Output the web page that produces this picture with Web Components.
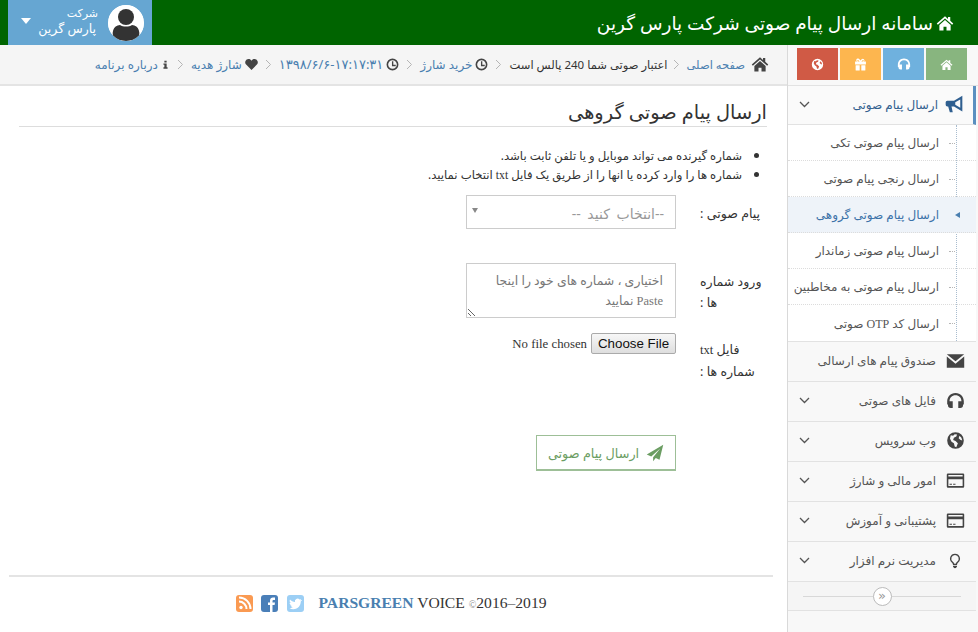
<!DOCTYPE html>
<html lang="fa" dir="rtl">
<head>
<meta charset="utf-8">
<title>ارسال پیام صوتی گروهی</title>
<style>
  html,body{margin:0;padding:0;height:632px;overflow:hidden;background:#fff;}
  body{font-family:"Noto Sans","DejaVu Sans",sans-serif;}
  #page{display:flex;flex-direction:column;height:632px;}
  #body{display:flex;flex:1;min-height:0;}
  ps-side{flex:none;}
  #main{flex:1;min-width:0;display:flex;flex-direction:column;}
</style>
</head>
<body>
<div id="page">
  <ps-header></ps-header>
  <div id="body">
    <ps-side></ps-side>
    <div id="main">
      <ps-crumbs></ps-crumbs>
      <ps-form></ps-form>
      <ps-foot></ps-foot>
    </div>
  </div>
</div>

<script>
// icons, all on a 24 box so they scale with width/height
const ICONS = {
  home: '<path d="M12 3 1 12.600l1.500 1.700L12 6l9.500 8.300 1.500-1.700-4-3.500V4h-3v2.500z"/><path d="M12 8 4.500 14.500V22H10v-5h4v5h5.500v-7.500z"/>',
  bullhorn: '<path d="M22 2 12 8H4a2 2 0 0 0-2 2v3a2 2 0 0 0 2 2h1l2 7h3.500l-1.500-7h3l10 6zM19.500 6.500v10L13.500 13V10z" fill-rule="evenodd"/>',
  mail: '<path d="M1 4h22L12 13z"/><path d="M1 7v14h22V7L12 16z"/>',
  phones: '<path d="M12 2.500C5.500 2.500 1.500 7.500 1.500 13v4h3v-4c0-4.500 3-7.500 7.500-7.500s7.500 3 7.500 7.500v4h3v-4c0-5.500-4-10.500-10.500-10.500z"/><path d="M4 13h4.500v8.500H6a3.500 3.500 0 0 1-3.500-3.500v-2a3 3 0 0 1 1.500-3zM20 13h-4.500v8.500H18a3.500 3.500 0 0 0 3.500-3.500v-2a3 3 0 0 0-1.500-3z"/>',
  globe: '<path fill-rule="evenodd" d="M12 1.500a10.500 10.500 0 1 0 0 21 10.500 10.500 0 0 0 0-21zM6 5.500l3 .5 2-2 3 .5-1 2.500-3 1.500-1 3 3 1 3 3-2 5-2-1-1-4-3-2-2-4zM17 6l2.500 2.500 1 3.500-2.500-1-2-2z"/>',
  card: '<path fill-rule="evenodd" d="M2.500 3h19A1.500 1.500 0 0 1 23 4.500v15a1.500 1.500 0 0 1-1.500 1.500h-19A1.500 1.500 0 0 1 1 19.500v-15A1.500 1.500 0 0 1 2.500 3zM3 5v2h18V5zM3 10.500V19h18v-8.500zM4.500 16h3v1.500h-3zM9 16h3v1.500H9z"/>',
  bulb: '<path fill-rule="evenodd" d="M12 1a7.500 7.500 0 0 0-4.500 13.500c1 1 1.500 2 1.500 3.500h6c0-1.500.5-2.500 1.500-3.500A7.500 7.500 0 0 0 12 1zm0 2a5.500 5.500 0 0 1 3.200 10c-1.200 1-2 2-2.200 3h-2c-.2-1-1-2-2.200-3A5.500 5.500 0 0 1 12 3z"/><path d="M9 19h6v1.500l-1 1v.5l-2 1-2-1v-.5l-1-1z"/>',
  plane: '<path d="M23 1 1 14l6 2.500L19 6 9.500 17.500v5.500l3.500-4.500 5 2.500z"/>',
  heart: '<path d="M12 22 2.500 12.500A6 6 0 0 1 7 2c2 0 3.800 1 5 3 1.200-2 3-3 5-3a6 6 0 0 1 4.500 10.500z"/>',
  clock: '<path fill-rule="evenodd" d="M12 1a11 11 0 1 0 0 22 11 11 0 0 0 0-22zm0 3a8 8 0 1 1 0 16 8 8 0 0 1 0-16z"/><path d="M11 6h2.500v6.500H18V15h-7z"/>',
  info: '<path d="M9 2h6v4.500H9zM6.500 9H15v10.500h2.500V23h-11v-3.500H9V12.500H6.500z"/>',
  gift: '<path fill-rule="evenodd" d="M7.500 1a3 3 0 0 0-2 5.500H2V12h20V6.500h-3.500A3 3 0 0 0 14 2.500l-2 2-2-2A3.500 3.500 0 0 0 7.500 1zm0 2.500L10.500 6.500h-3a1.500 1.500 0 0 1 0-3zm9 0a1.500 1.500 0 0 1 0 3h-3z"/><path d="M3 13.500h7.500V23H4a1 1 0 0 1-1-1zM13.500 13.500H21V22a1 1 0 0 1-1 1h-6.500z"/>'
};
const icon = (name, size, color) =>
  `<svg width="${size}" height="${size}" viewBox="0 0 24 24" fill="${color || "currentColor"}" style="flex:none;display:block">${ICONS[name]}</svg>`;
// latin words fall back to the serif in the original
const SERIF = 'style="font-family:\'Liberation Serif\',serif"';

customElements.define(
  "ps-header",
  class extends HTMLElement {
    constructor() {
      super();
      this.attachShadow({ mode: "open" }).innerHTML = String.raw`
      <style>
        :host{display:flex;flex:none;height:45px;background:#006400;color:#fff;align-items:center;justify-content:space-between;}
        h1{margin:0;padding:0 24px 0 0;font-size:18.500px;font-weight:500;display:flex;align-items:center;gap:3px;line-height:45px;white-space:nowrap;}
        .user{display:flex;align-items:center;width:144px;height:45px;background:#66a6d2;margin-left:8px;font-size:12.500px;line-height:16px;box-sizing:border-box;padding-right:8px;}
        .face{width:36px;height:36px;border-radius:50%;background:#fff;display:block;flex:none;}
        .name{margin-right:10px;flex:1;white-space:nowrap;margin-top:-3px;}
        .name span{display:block;}
        .name span:first-child{font-size:11px;}
        .name span:last-child{padding-right:2px;}
        .caret{width:0;height:0;border:5px solid transparent;border-top:6px solid #fff;border-bottom:0;margin-left:13px;margin-top:-3px;}
      </style>
      <h1>${icon("home", 18)}سامانه ارسال پیام صوتی شرکت پارس گرین</h1>
      <div class="user">
        <svg class="face" viewBox="0 0 36 36"><circle cx="18" cy="18" r="18" fill="#fff"/><circle cx="18" cy="12" r="8" fill="#333"/><path d="M6 33c-3-4-1-13 6-13 3 2 9 2 12 0 7 0 9 9 6 13-3 2-8 3-12 3s-9-1-12-3z" fill="#333"/></svg>
        <div class="name"><span>شرکت</span><span>پارس گرین</span></div>
        <div class="caret"></div>
      </div>`;
    }
  }
);

customElements.define(
  "ps-crumbs",
  class extends HTMLElement {
    constructor() {
      super();
      const sep = '<svg class="sep" width="7" height="11" viewBox="0 0 7 11"><path d="M1 1 5.500 5.500 1 10" fill="none" stroke="#b5b5b5" stroke-width="1"/></svg>';
      this.attachShadow({ mode: "open" }).innerHTML = String.raw`
      <style>
        :host{display:flex;flex:none;height:41px;box-sizing:border-box;background:#f5f5f5;border-bottom:2px solid #e4e4e4;align-items:center;padding:0 18px 1px 0;gap:3px;font-size:12px;color:#333;white-space:nowrap;}
        a{color:#4a7fb0;text-decoration:none;}
        span{font-size:11.500px;}
        .sep{margin:0 4px;flex:none;}
        .sep.first{margin:0 3px;}
        .date{font-size:13px;letter-spacing:1.500px;}
        svg{color:#444;}
      </style>
      ${icon("home", 18)}<a href="#" style="margin-right:3px;font-size:11.500px">صفحه اصلی</a>${sep.replace('class="sep"', 'class="sep first"')}
      <span>اعتبار صوتی شما 240 پالس است</span>${sep}
      ${icon("clock", 13)}<a href="#">خرید شارژ</a>${sep}
      ${icon("clock", 13)}<a class="date" href="#">۱۳۹۸/۶/۶-۱۷:۱۷:۳۱</a>${sep}
      ${icon("heart", 13)}<a href="#">شارژ هدیه</a>${sep}
      ${icon("info", 9)}<a href="#">درباره برنامه</a>`;
    }
  }
);

customElements.define(
  "ps-side",
  class extends HTMLElement {
    constructor() {
      super();
      const chev = '<svg class="chev" width="11" height="7" viewBox="0 0 11 7"><path d="M1 1l4.500 4.500L10 1" fill="none" stroke="currentColor" stroke-width="1.300"/></svg>';
      const subs = ["ارسال پیام صوتی تکی", "ارسال رنجی پیام صوتی", "ارسال پیام صوتی گروهی", "ارسال پیام صوتی زماندار", "ارسال پیام صوتی به مخاطبین", `ارسال کد <span ${SERIF}>OTP</span> صوتی`];
      const items = [
        ["mail", "صندوق پیام های ارسالی", false],
        ["phones", "فایل های صوتی", true],
        ["globe", "وب سرویس", true],
        ["card", "امور مالی و شارژ", true],
        ["card", "پشتیبانی و آموزش", true],
        ["bulb", "مدیریت نرم افزار", true]
      ];
      this.attachShadow({ mode: "open" }).innerHTML = String.raw`
      <style>
        :host{display:block;width:191px;height:587px;box-sizing:border-box;background:#f8f8f8;border-left:1px solid #d9d9d9;font-size:12px;color:#555;overflow:hidden;}
        .short{display:flex;gap:2px;height:41px;box-sizing:border-box;padding:3px 11px 0 0;border-bottom:1px solid #e2e2e2;}
        .short div{width:41px;height:32px;display:flex;align-items:center;justify-content:center;color:#fff;}
        .menu{margin-right:2px;background:#f8f8f8;}
        .open{height:39px;display:flex;align-items:center;padding:0 9px 2px 0;gap:6px;background:#fafafa;border-right:3px solid #5b8fc0;border-bottom:1px solid #e2e2e2;box-sizing:border-box;color:#33618f;}
        .row{height:40px;display:flex;align-items:center;box-sizing:border-box;padding:0 8px 2px 0;border-bottom:1px solid #e2e2e2;gap:6px;}
        .row .ico{width:26px;display:flex;justify-content:center;flex:none;color:#444;}
        .open .ico{width:20px;display:flex;justify-content:center;flex:none;color:#2f5f90;}
        .chev{margin-right:auto;margin-left:11px;color:#555;}
        .sub{position:relative;background:#fff;border-bottom:1px solid #e2e2e2;}
        .sub::before{content:"";position:absolute;top:0;bottom:0;right:19px;border-right:1px dotted #a8bccf;}
        .sub div{height:36px;box-sizing:border-box;display:flex;align-items:center;gap:3px;padding:0 37px 0 0;border-bottom:1px dotted #dcdcdc;position:relative;}
        .sub div:last-child{border-bottom:0;}
        .sub div::before{content:"";position:absolute;right:21px;top:18px;width:6px;border-top:1px dotted #b5b5b5;}
        .sub .on{background:#eef3f9;color:#3c72a8;}
        .sub .on::before{border:0;border-right:5px solid #4a7fb0;border-top:3px solid transparent;border-bottom:3px solid transparent;width:0;top:15px;right:16px;}
        .fold{height:28px;display:flex;align-items:center;justify-content:center;border-bottom:1px solid #e2e2e2;position:relative;background:#f5f5f5;}
        .fold::before{content:"";position:absolute;left:15px;right:15px;top:14px;border-top:1px solid #d8d8d8;}
        .fold span{position:relative;width:19px;height:19px;box-sizing:border-box;border:1px solid #bbb;border-radius:50%;background:#fff;color:#999;font:13px/15px "DejaVu Sans",sans-serif;text-align:center;}
      </style>
      <div class="short">
        <div style="background:#88b57f">${icon("home", 13)}</div>
        <div style="background:#6fb1de">${icon("phones", 14)}</div>
        <div style="background:#fdb64f">${icon("gift", 13)}</div>
        <div style="background:#d05a45">${icon("globe", 13)}</div>
      </div>
      <div class="menu">
        <div class="open"><span class="ico">${icon("bullhorn", 20)}</span>ارسال پیام صوتی${chev}</div>
        <div class="sub">${subs.map((s, i) => `<div class="${i == 2 ? "on" : ""}"><span>${s}</span></div>`).join("")}</div>
        ${items.map(([ic, t, c]) => `<div class="row"><span class="ico">${icon(ic, ic == "bulb" ? 16 : 19)}</span>${t}${c ? chev : ""}</div>`).join("")}
        <div class="fold"><span>«</span></div>
      </div>`;
    }
  }
);

customElements.define(
  "ps-form",
  class extends HTMLElement {
    constructor() {
      super();
      this.attachShadow({ mode: "open" }).innerHTML = String.raw`
      <style>
        :host{display:block;flex:1;min-height:0;padding:0 20px 0 19px;font-size:11.700px;color:#333;}
        h2{margin:0;height:40px;line-height:51px;font-size:19.400px;font-weight:400;border-bottom:1px solid #ddd;}
        ul{margin:18px 0 0;padding:0 25px 0 0;line-height:18px;}
        li::marker{font-size:15px;}
        .grid{display:grid;grid-template-columns:91px 210px;justify-content:start;margin-top:10px;}
        label{line-height:21px;padding:8px 1px 0 24px;text-align:left;font-size:12.600px;}
        .pick{height:34px;box-sizing:border-box;border:1px solid #ccc;position:relative;color:#999;display:flex;align-items:center;padding:3px 11px 0;font-size:14px;word-spacing:3px;}
        .pick::after{content:"";position:absolute;left:5px;top:12px;border:3px solid transparent;border-top:5px solid #888;}
        textarea{width:210px;height:55px;box-sizing:border-box;border:1px solid #ccc;margin:34px 0 0;padding:7px 12px 0;font:12.500px/20px "Liberation Serif","DejaVu Sans",serif;display:block;border-radius:0;}
        textarea::placeholder{color:#777;opacity:1;}
        .tall{margin-top:34px;}
        input[type=file]{margin:15px 0 0;font:12.800px "Liberation Serif",serif;width:210px;display:block;}
        input[type=file]::file-selector-button{font:13.333px "Liberation Sans",sans-serif;height:21px;width:85px;padding:0;margin-inline-end:4px;color:#111;border:1px solid #aaa;border-radius:2px;background:linear-gradient(#f7f7f7,#dedede);}
        .low{margin-top:13px;}
        button{grid-column:2;justify-self:start;margin-top:53px;width:140px;height:36px;box-sizing:border-box;background:#fff;border:1px solid #9dbf97;border-bottom-width:2px;color:#6b9d62;font:12.800px "Noto Sans","DejaVu Sans",sans-serif;display:flex;align-items:center;justify-content:center;gap:7px;}
      </style>
      <h2>ارسال پیام صوتی گروهی</h2>
      <ul>
        <li>شماره گیرنده می تواند موبایل و یا تلفن ثابت باشد.</li>
        <li>شماره ها را وارد کرده یا انها را از طریق یک فایل <span ${SERIF}>txt</span> انتخاب نمایید.</li>
      </ul>
      <div class="grid">
        <label>پیام صوتی :</label>
        <div class="pick">--انتخاب کنید --</div>
        <label class="tall">ورود شماره ها :</label>
        <textarea placeholder="اختیاری ، شماره های خود را اینجا Paste نمایید"></textarea>
        <label class="low">فایل <span ${SERIF}>txt</span> شماره ها :</label>
        <input type="file">
        <button>${icon("plane", 18)}ارسال پیام صوتی</button>
      </div>`;
    }
  }
);

customElements.define(
  "ps-foot",
  class extends HTMLElement {
    constructor() {
      super();
      this.attachShadow({ mode: "open" }).innerHTML = String.raw`
      <style>
        :host{display:flex;flex:none;height:57px;box-sizing:border-box;margin:0 14px 0 9px;border-top:2px solid #e4e4e4;align-items:center;justify-content:center;gap:15px;font:15.600px "Liberation Serif",serif;color:#333;direction:ltr;padding-bottom:3px;}
        .soc{display:flex;gap:8.500px;}
        .soc i{display:block;width:17px;height:17px;border-radius:3px;}
        b{color:#4a7fb0;}
        small{font-size:10px;color:#888;}
      </style>
      <div class="soc">
        <i style="background:#fa9a52"><svg width="17" height="17" viewBox="0 0 17 17" fill="#fff"><circle cx="5" cy="12.500" r="1.700"/><path d="M3 7.500a6.500 6.500 0 0 1 6.500 6.500H11.500A8.500 8.500 0 0 0 3 5.500zM3 3.500a10.500 10.500 0 0 1 10.500 10.500H15.500A12.500 12.500 0 0 0 3 1.500z" /></svg></i>
        <i style="background:#4a7fb8"><svg width="17" height="17" viewBox="0 0 17 17" fill="#fff"><path d="M9 17V10H7V7.500h2V5.500C9 3.500 10.300 2.500 12 2.500h2V5h-1.300c-.9 0-1.200.4-1.200 1.100v1.400H14l-.4 2.500h-2.100v7z"/></svg></i>
        <i style="background:#9ccff5"><svg width="17" height="17" viewBox="0 0 17 17" fill="#fff"><path d="M14.500 5c-.5.200-1 .4-1.500.4.500-.3 1-.8 1.200-1.400-.5.300-1.100.5-1.700.6a2.600 2.600 0 0 0-4.500 2.400C6 6.900 4.300 6 3 4.500c-.7 1.200-.3 2.700.8 3.500-.4 0-.8-.1-1.200-.3 0 1.300.9 2.400 2.100 2.600-.4.100-.8.100-1.200 0 .3 1 1.300 1.800 2.400 1.800-1 .8-2.300 1.200-3.600 1 1.200.8 2.500 1.200 4 1.200 4.900 0 7.600-4.100 7.400-7.700.6-.4 1.100-1 1.400-1.600z"/></svg></i>
      </div>
      <div><b>PARSGREEN</b> VOICE <small>©</small>2016–2019</div>`;
    }
  }
);
</script>
</body>
</html>
